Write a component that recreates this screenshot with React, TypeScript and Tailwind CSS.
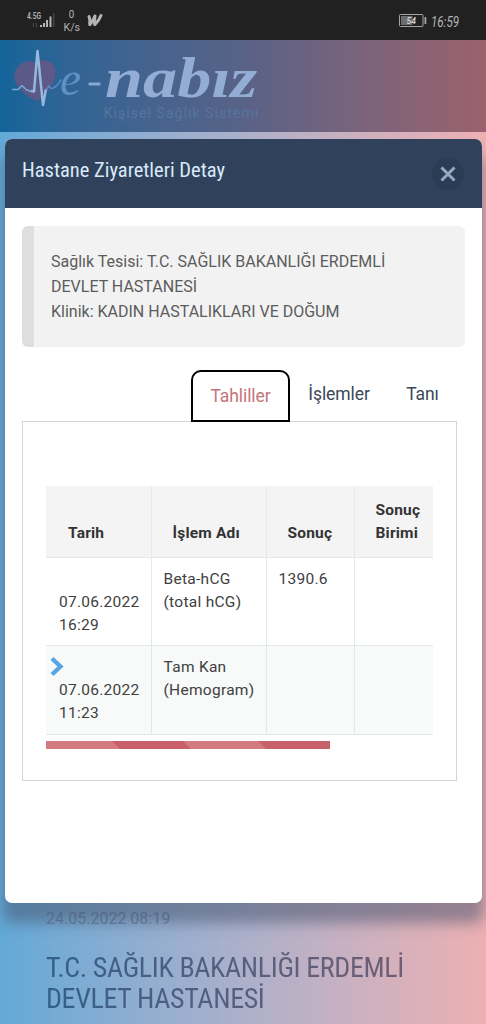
import React from 'react';

interface ResultRow {
  date: string;
  time: string;
  name: string[];
  result: string;
  expandable?: boolean;
}

const rows: ResultRow[] = [
  { date: '07.06.2022', time: '16:29', name: ['Beta-hCG', '(total hCG)'], result: '1390.6' },
  { date: '07.06.2022', time: '11:23', name: ['Tam Kan', '(Hemogram)'], result: '', expandable: true },
];

const StatusBar: React.FC = () => (
  <div className="flex h-10 items-center bg-[#212121] px-[24px] text-[#b5b5b5]">
    <svg width="82" height="40" viewBox="24 0 82 40" fill="currentColor">
      <text x="27" y="19" fontSize="9.500" fontWeight="600" textLength="14" lengthAdjust="spacingAndGlyphs">4.5G</text>
      <path d="M33.500 27v-4M36.500 23v4" stroke="#4c4c4c" strokeWidth="1" fill="none" />
      <rect x="40" y="25" width="2" height="2" />
      <rect x="43" y="23" width="2" height="4" />
      <rect x="46" y="20" width="2" height="7" />
      <rect x="49.500" y="16.500" width="2" height="10.500" />
      <rect x="53" y="13" width="1.500" height="14" fill="#454545" />
      <text x="68.800" y="18" fontSize="11" textLength="5.500" lengthAdjust="spacingAndGlyphs">0</text>
      <text x="63.500" y="30.800" fontSize="11" textLength="16.500" lengthAdjust="spacingAndGlyphs">K/s</text>
      <path d="M89 16.500q1.500 3 0.700 8M90 24.500q3.500-4 5-8.500M95 16q-1 5-0.300 8.500M95 24.500q4-4 6-9" stroke="currentColor" strokeWidth="3" strokeLinecap="round" strokeLinejoin="round" fill="none" />
    </svg>
    <svg className="ml-auto overflow-visible" width="64" height="40" viewBox="398 0 64 40">
      <rect x="399.500" y="14.500" width="23.500" height="12" rx="1" fill="none" stroke="#a5a5a5" />
      <rect x="401" y="16" width="11.500" height="9" fill="#6d6d6d" />
      <rect x="424.500" y="17" width="1.800" height="7" fill="#a5a5a5" />
      <text x="406.500" y="24.300" fontSize="9.500" fontWeight="600" fontStyle="italic" fill="#d0d0d0" textLength="9.500" lengthAdjust="spacingAndGlyphs">54</text>
      <text x="431" y="26.500" fontSize="14.500" fontStyle="italic" fill="#b5b5b5" textLength="28" lengthAdjust="spacingAndGlyphs">16:59</text>
    </svg>
  </div>
);

const Logo: React.FC = () => (
  <svg width="270" height="92" viewBox="0 40 270 92">
    <path
      d="M38 101C27 98 13 86 14.500 75C15.500 64 27 58 35 63C42 58 52 60 55 68C57 80 49 93 38 101Z"
      fill="#80527e"
      opacity="0.62"
    />
    <path d="M12 89.500h6l4-4 4 4 5 2" fill="none" stroke="#7ba8d4" strokeWidth="1.500" strokeLinejoin="round" />
    <path d="M31 91l3 0.500L37.500 51L43 105L46 89" fill="none" stroke="#93b9de" strokeWidth="2.500" strokeLinejoin="round" />
    <path d="M46 90l3-4q2 4 5 1.500q5-3 7-8" fill="none" stroke="#5f8dc0" strokeWidth="1.500" />
    <text x="60" y="95" fontSize="48" fontStyle="italic" className="font-['Liberation_Serif',serif]" fill="#5f91c4" textLength="21" lengthAdjust="spacingAndGlyphs">e</text>
    <rect x="88.500" y="82.500" width="12" height="3" rx="1" fill="#86a9d5" />
    <text x="105" y="96.500" fontSize="57" fontStyle="italic" fontWeight="700" className="font-['Liberation_Serif',serif]" fill="#93add5" textLength="152" lengthAdjust="spacingAndGlyphs">nabız</text>
    <text x="103.500" y="118" fontSize="14.500" fill="#56749f" textLength="155" lengthAdjust="spacing">Kişisel Sağlık Sistemi</text>
  </svg>
);

const ResultTable: React.FC = () => (
  <table className="w-[387px] table-fixed border-collapse text-left text-[15.500px] leading-[23px] tracking-[0.200px] text-[#404040]">
    <colgroup>
      <col className="w-[105px]" />
      <col className="w-[115px]" />
      <col className="w-[88px]" />
      <col className="w-[79px]" />
    </colgroup>
    <thead>
      <tr className="h-[71px] bg-[#f4f4f4] align-bottom text-[#333]">
        <th className="border-r border-b border-[#e4eaee] pb-3 pl-[22px]">Tarih</th>
        <th className="border-r border-b border-[#e4eaee] pb-3 pl-[21px]">İşlem Adı</th>
        <th className="border-r border-b border-[#e4eaee] pb-3 pl-[21px]">Sonuç</th>
        <th className="border-b border-[#e4eaee] pb-3 pl-[21px]">Sonuç<br />Birimi</th>
      </tr>
    </thead>
    <tbody>
      {rows.map((row) => (
        <tr key={row.time} className="h-[88.500px] align-top even:bg-[#f8f9f9]">
          <td className="relative border-r border-b border-[#e0e8ec] pt-[33px] pl-[13px] tracking-[0.250px]">
            {row.expandable && (
              <svg className="absolute top-[9.500px] left-1" width="14" height="21" viewBox="0 0 14 21">
                <path d="M2 2.500l8.500 8L2 18.500" fill="none" stroke="#58a5e5" strokeWidth="4.300" />
              </svg>
            )}
            {row.date}<br />{row.time}
          </td>
          <td className="border-r border-b border-[#e0e8ec] pt-[10px] pl-3 tracking-[0.280px]">{row.name[0]}<br />{row.name[1]}</td>
          <td className="border-r border-b border-[#e0e8ec] pt-[10px] pl-3 tracking-[0.280px]">{row.result}</td>
          <td className="border-b border-[#e0e8ec]" />
        </tr>
      ))}
    </tbody>
  </table>
);

const VisitDialog: React.FC = () => (
  <div className="absolute top-[139px] left-[5px] h-[764px] w-[477px] rounded-[7px] bg-white shadow-[0_18px_14px_2px_rgba(65,80,105,0.5)]">
    <div className="flex h-[69px] items-center justify-between rounded-t-[7px] bg-[#30425b] pr-[18px] pl-[17px]">
      <h1 className="-mt-[7px] font-['Roboto_Condensed',Roboto,sans-serif] text-[20.500px] font-stretch-condensed text-[#d9e9fa]">Hastane Ziyaretleri Detay</h1>
      <button className="flex size-8 items-center justify-center rounded-full bg-[#2b3c56]" aria-label="Kapat">
        <svg width="16" height="16" viewBox="0 0 16 16">
          <path d="M1.500 1.500l13 13M14.500 1.500l-13 13" stroke="#98a8bd" strokeWidth="3" />
        </svg>
      </button>
    </div>
    <div className="px-[17px] pt-[18px]">
      <div className="h-[121px] rounded-md border-l-12 border-[#dedede] bg-[#f2f2f2] pt-[23px] pl-[17px] text-[16px] leading-[25px] text-[#5c5c5c]">
        <p>Sağlık Tesisi: T.C. SAĞLIK BAKANLIĞI ERDEMLİ</p>
        <p>DEVLET HASTANESİ</p>
        <p>Klinik: KADIN HASTALIKLARI VE DOĞUM</p>
      </div>
      <div className="relative z-10 mt-[23px] -mb-px flex h-[52px] text-[17.500px] leading-[26px] tracking-[-0.080px] text-[#3b4858]">
        <div className="ml-[169px] w-[99px] rounded-t-[10px] border-[2.500px] border-black bg-white pt-[11px] text-center text-[#c5747b]">Tahliller</div>
        <div className="w-[98px] pt-[11px] text-center">İşlemler</div>
        <div className="w-[69px] pt-[11px] text-center">Tanı</div>
      </div>
      <div className="h-[360px] w-[435px] border border-[#d2d4d6] pt-[64px] pl-[23px]">
        <ResultTable />
        <svg className="mt-[6px]" width="284" height="8" viewBox="0 0 284 8">
          <path d="M0 0h284v8H0z" fill="#d47b82" />
          <path d="M66 0h71l8 8H74zM212 0h72v8h-64z" fill="#c76068" />
        </svg>
      </div>
    </div>
  </div>
);

const App: React.FC = () => (
  <div className="relative h-screen overflow-hidden bg-linear-to-r from-[#62a9d7] via-[#acb0cb] to-[#ecb0b2] font-['Roboto',sans-serif]">
    <StatusBar />
    <header className="h-[92px] bg-linear-to-r from-[#12649a] via-[#586287] to-[#9b616d]">
      <Logo />
    </header>
    <main className="flex flex-col pt-[775px] pl-[46px]">
      <p className="text-[16px] leading-6 text-[#66829f]">24.05.2022 08:19</p>
      <h2 className="mt-[21px] bg-linear-to-r from-[#315f88] to-[#7b5c71] bg-clip-text font-['Roboto_Condensed',Roboto,sans-serif] text-[28px] leading-[31px] font-stretch-condensed tracking-[-0.360px] text-transparent">
        T.C. SAĞLIK BAKANLIĞI ERDEMLİ<br />DEVLET HASTANESİ
      </h2>
    </main>
    <VisitDialog />
  </div>
);

export default App;
